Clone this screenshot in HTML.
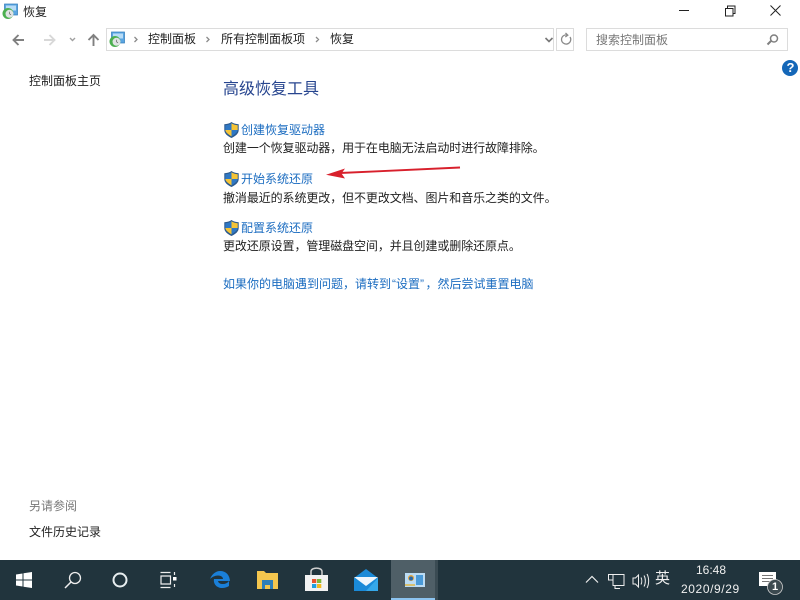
<!DOCTYPE html>
<html><head><meta charset="utf-8"><style>
html,body{margin:0;padding:0;width:800px;height:600px;overflow:hidden;background:#fff}
body{position:relative;font-family:"Liberation Sans","Noto Sans CJK SC",sans-serif;font-size:12px;color:#222;filter:blur(.25px)}
.t{position:absolute;white-space:nowrap;line-height:16px}
.d{letter-spacing:-.09px}
.l{color:#1b6cc0}
svg{position:absolute;overflow:visible}
</style></head><body>
<svg style="left:0;top:0" width="800" height="600" viewBox="0 0 800 600">
<defs>
<g id="cp"><rect x="2.500" y="0" width="13" height="11" fill="#5aa5e2" stroke="#2f7ab8" stroke-width=".7"/><rect x="4" y="1.500" width="10" height="5" fill="#b8dcf6"/><circle cx="6" cy="9.500" r="5.500" fill="#4caf50"/><circle cx="7.500" cy="9.800" r="4" fill="#dfe3e3"/><path d="M7.500 7.800v2l1.500 1" stroke="#666" fill="none" stroke-width=".7"/></g>
<g id="sh"><path d="M7.500 0C5.500 1.500 3 2 .3 2.200V8c0 3.500 3 6 7.200 8 4.200-2 7.200-4.500 7.200-8V2.200C12 2 9.500 1.500 7.500 0z" fill="#2c5a8e"/><path d="M7.500 1.300V8H1.300V3.200C3.800 3 5.900 2.500 7.500 1.300z" fill="#2f78c4"/><path d="M7.500 1.300c1.600 1.200 3.700 1.700 6.200 1.900V8H7.500z" fill="#f5c436"/><path d="M7.500 8h6.200c-.3 2.500-3 4.400-6.200 6.400z" fill="#2f78c4"/><path d="M1.300 8h6.200v6.400c-3.200-2-5.900-3.900-6.200-6.400z" fill="#f5c436"/></g>
</defs>
<use href="#cp" x="2" y="4"/>
<path d="M14 40h10M18.500 35l-5 5 5 5" stroke="#808080" stroke-width="1.900" fill="none"/>
<path d="M44 40h10M49.500 35l5 5-5 5" stroke="#d8d8d8" stroke-width="1.900" fill="none"/>
<path d="M70 38l2.500 2.500 2.500-2.500" stroke="#a0a0a0" stroke-width="1.400" fill="none"/>
<path d="M93.500 46V35M88.500 40l5-5 5 5" stroke="#808080" stroke-width="1.900" fill="none"/>
<rect x="106.500" y="28.500" width="447" height="22" fill="#fff" stroke="#dcdcdc"/>
<rect x="556.500" y="28.500" width="17" height="22" fill="#fff" stroke="#dcdcdc"/>
<rect x="586.500" y="28.500" width="201" height="22" fill="#fff" stroke="#dcdcdc"/>
<use href="#cp" x="109" y="32"/>
<path d="M134.500 37l2.500 2.500-2.500 2.500M206.500 37l2.500 2.500-2.500 2.500M316 37l2.500 2.500-2.500 2.500" stroke="#8a8a8a" stroke-width="1.300" fill="none"/>
<path d="M545.500 38l3.500 3.500 3.500-3.500" stroke="#777" stroke-width="1.600" fill="none"/>
<path d="M570 37a4.600 4.600 0 1 1-2.200-1.800M565.500 33l2.300 2.200-2.500 1.800" stroke="#8a8a8a" stroke-width="1.300" fill="none"/>
<circle cx="774" cy="38.500" r="3.500" stroke="#808080" stroke-width="1.500" fill="none"/><path d="M771 41l-3.500 3.500" stroke="#808080" stroke-width="2"/>
<path d="M679 10.500h10" stroke="#222"/>
<path d="M725.500 8.500h7.500v7.500h-7.500zM727.500 8.500V6h7.500v7.500h-2" stroke="#222" fill="none" stroke-width="1"/>
<path d="M770.500 5.500l10 10M780.500 5.500l-10 10" stroke="#222" fill="none"/>
<circle cx="790" cy="68" r="8" fill="#1467b8"/>
<use href="#sh" x="224" y="122"/>
<use href="#sh" x="224" y="171"/>
<use href="#sh" x="224" y="220"/>
<path d="M460 167.500L340 173" stroke="#d8202c" stroke-width="1.900" fill="none"/>
<path d="M326 174.700L345 168.500l-3.500 5 3.500 5z" fill="#d8202c"/>
<rect x="0" y="560" width="800" height="40" fill="#21343d"/>
<rect x="391" y="560" width="44" height="40" fill="#4f5f67"/>
<rect x="391" y="598" width="44" height="2" fill="#8cc4f0"/>
<rect x="435" y="560" width="3" height="40" fill="#3a4b53"/>
<path d="M16 574.500l6.500-1v6H16zM23.500 573.300L32 572v7.500h-8.500zM16 580.500h6.500v6l-6.500-1zM23.500 580.500H32V588l-8.500-1.300z" fill="#fff"/>
<circle cx="75" cy="578" r="5.500" stroke="#eee" stroke-width="1.300" fill="none"/><path d="M71 582l-6 6" stroke="#eee" stroke-width="1.500"/>
<circle cx="120" cy="580" r="6.500" stroke="#e8eef0" stroke-width="2" fill="none"/>
<path d="M160.500 572.500h10M160.500 587.500h10M161 576h9.500v8H161zM174.500 572v3M174.500 584v3" stroke="#eee" stroke-width="1.200" fill="none"/><rect x="173" y="577" width="3.500" height="3.500" fill="#fff"/>
<path d="M230 582c0-7-4-11-10-11-4 0-8 3-10 8 2-2 5-3.500 8-3.500 3 0 5 1.500 5 3.500h-9c-1 5 3 9 8 9 3 0 5.500-1 7-2v-5c-1.500 2-3.500 3-6 3-3 0-4.500-1-5-3H230z" fill="#1a7fd8"/>
<path d="M257 571h7l2 2h12v16h-21z" fill="#f4c64e"/><path d="M262 580h11v9h-3v-4h-5v4h-3z" fill="#2f7fb8"/>
<path d="M305 575h23v16h-23z" fill="#f2f2f2"/><path d="M311 575v-3.500c0-4.500 11-4.500 11 0V575" stroke="#cfcfcf" fill="none" stroke-width="1.500"/>
<rect x="312" y="579" width="4.300" height="4" fill="#e8532e"/><rect x="317" y="579" width="4.300" height="4" fill="#7db63a"/><rect x="312" y="584" width="4.300" height="4" fill="#1f9fe0"/><rect x="317" y="584" width="4.300" height="4" fill="#f4b91e"/>
<path d="M354 578l12-9 12 9v13h-24z" fill="#1a8ad8"/><path d="M354 577h24l-12 9z" fill="#eef6fc"/><path d="M378 578v13h-12z" fill="#35a8ea"/>
<rect x="405" y="573" width="20" height="14" fill="#bcdcf4"/><circle cx="411" cy="578" r="3" fill="#e2a23a"/><circle cx="411" cy="578.500" r="2" fill="#2c6aa8"/><rect x="416" y="575" width="7" height="10" fill="#4a9ad8"/><rect x="405" y="584" width="10" height="2" fill="#d8c070"/>
<path d="M586 582.500l6-6 6 6" stroke="#eee" stroke-width="1.200" fill="none"/>
<path d="M608.500 574.500h15.500v11h-11v-5.500h-4.500zM613 574.500v5.500M615 585.500v3h5" stroke="#eee" fill="none"/>
<path d="M633 578h2.500l3-3v12l-3-3H633z" stroke="#eee" fill="none"/><path d="M641 577.500c1 2 1 5 0 7M644 575.500c1.800 3 1.800 8 0 11M647 574c2.200 4 2.200 10 0 14" stroke="#eee" fill="none"/>
<path d="M759 572h17v14h-5l-3 3v-3h-9z" fill="#fff"/><path d="M762 575.500h11M762 578.500h11M762 581.500h8" stroke="#777"/>
<circle cx="775" cy="587" r="7.500" fill="#3c4a50" stroke="#ccc" stroke-width=".8"/>
</svg>
<div class="t" style="left:23px;top:4px;color:#222">恢复</div>
<div class="t" style="left:148px;top:31px;">控制面板</div>
<div class="t" style="left:221px;top:31px;">所有控制面板项</div>
<div class="t" style="left:330px;top:31px;">恢复</div>
<div class="t" style="left:596px;top:32px;color:#777">搜索控制面板</div>
<div class="t" style="left:786.500px;top:60px;color:#fff;font-weight:bold;font-size:13px">?</div>
<div class="t" style="left:29px;top:73px">控制面板主页</div>
<div class="t" style="left:223px;top:80px;font-size:16px;line-height:20px;color:#27458f;">高级恢复工具</div>
<div class="t l" style="left:241px;top:122px">创建恢复驱动器</div>
<div class="t d" style="left:223px;top:140px">创建一个恢复驱动器，用于在电脑无法启动时进行故障排除。</div>
<div class="t l" style="left:241px;top:171px">开始系统还原</div>
<div class="t d" style="left:223px;top:190px">撤消最近的系统更改，但不更改文档、图片和音乐之类的文件。</div>
<div class="t l" style="left:241px;top:220px">配置系统还原</div>
<div class="t d" style="left:223px;top:238px">更改还原设置，管理磁盘空间，并且创建或删除还原点。</div>
<div class="t l" style="left:223px;top:276px">如果你的电脑遇到问题，请转到<span style="padding-left:1px">“</span>设置<span style="padding-right:1.500px">”</span>，然后尝试重置电脑</div>
<div class="t" style="left:29px;top:498px;color:#777">另请参阅</div>
<div class="t" style="left:29px;top:524px">文件历史记录</div>
<div class="t" style="left:655px;top:571px;color:#f0f0f0;font-size:15px">英</div>
<div class="t" style="left:696px;top:562px;color:#f0f0f0">16:48</div>
<div class="t" style="left:681px;top:581px;color:#f0f0f0;letter-spacing:.6px">2020/9/29</div>
<div class="t" style="left:772px;top:579px;color:#fff;font-weight:bold;font-size:11px">1</div>
</body></html>
